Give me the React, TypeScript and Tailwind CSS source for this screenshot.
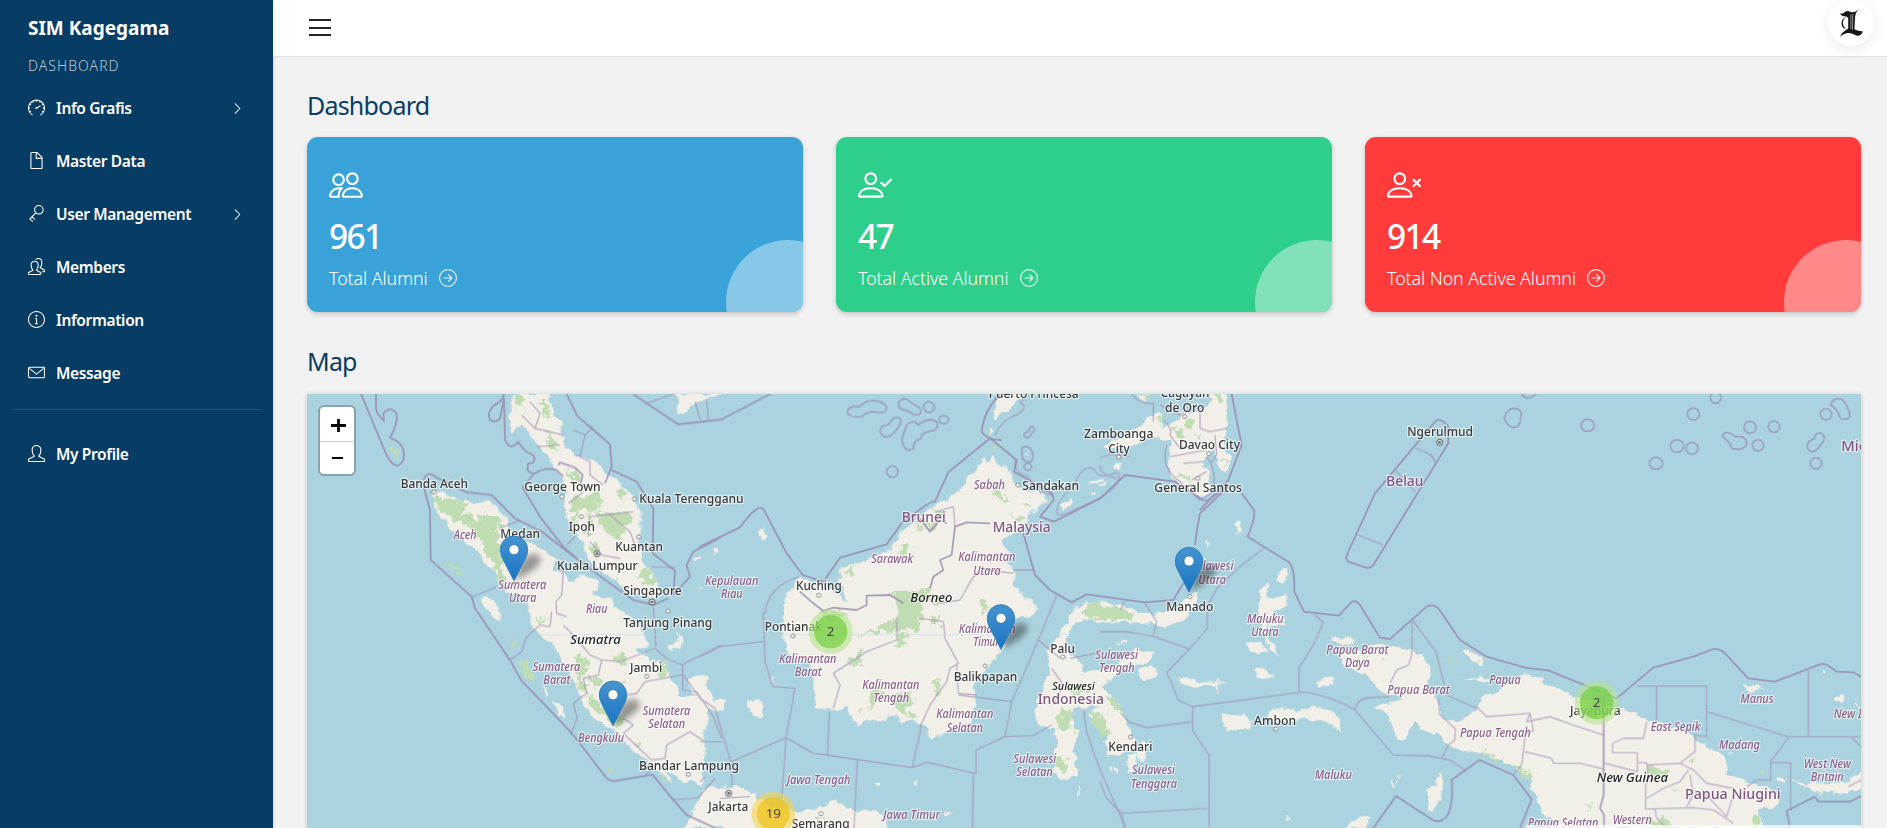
import type { ReactNode } from "react";
import { BsArrowRightCircle, BsChevronRight, BsPeople } from "react-icons/bs";
import { SlDoc, SlEnvolope, SlInfo, SlKey, SlPeople, SlSpeedometer, SlUser } from "react-icons/sl";

/* ---------- Sidebar ---------- */

const menu: { label: string; icon: ReactNode; more?: boolean }[] = [
  { label: "Info Grafis", icon: <SlSpeedometer />, more: true },
  { label: "Master Data", icon: <SlDoc /> },
  { label: "User Management", icon: <SlKey />, more: true },
  { label: "Members", icon: <SlPeople /> },
  { label: "Information", icon: <SlInfo /> },
  { label: "Message", icon: <SlEnvolope /> },
];

function MenuRow({ label, icon, more }: { label: string; icon: ReactNode; more?: boolean }) {
  return (
    <a className="flex h-[53px] items-center pl-7 pr-[29px] text-white">
      <span className="mb-[3px] text-[17px]">{icon}</span>
      <span className="ml-[11px] flex-1 whitespace-nowrap text-[15.5px] font-semibold tracking-[-0.35px]">{label}</span>
      {more && <BsChevronRight className="text-[13px]" />}
    </a>
  );
}

function Sidebar() {
  return (
    <aside className="z-10 flex h-full w-[273px] shrink-0 flex-col bg-[#073c64] shadow-[0_0_3px_rgba(0,0,0,0.2)]">
      <div className="mt-[14px] pl-7 text-[19px] leading-7 font-bold text-white">SIM Kagegama</div>
      <div className="mt-[12px] pl-7 text-[14px] leading-6 font-light tracking-[1.05px] text-[#b9c9d6]">DASHBOARD</div>
      <nav className="mt-[4px]">
        {menu.map((m) => (
          <MenuRow key={m.label} {...m} />
        ))}
      </nav>
      <hr className="mx-[11px] mt-[9px] border-t border-[#234f75]" />
      <div className="mt-[18px]">
        <MenuRow label="My Profile" icon={<SlUser />} />
      </div>
    </aside>
  );
}

/* ---------- Statistic cards ---------- */

const personPath =
  "M6 8a3 3 0 1 0 0-6 3 3 0 0 0 0 6m2-3a2 2 0 1 1-4 0 2 2 0 0 1 4 0m4 8c0 1-1 1-1 1H1s-1 0-1-1 1-4 6-4 6 3 6 4m-1-.004c-.001-.246-.154-.986-.832-1.664C9.516 10.68 8.289 10 6 10s-3.516.68-4.168 1.332c-.678.678-.83 1.418-.832 1.664z";

function PersonIcon({ badge }: { badge: string }) {
  return (
    <svg viewBox="0 0 16 16" className="size-[34px]" fill="currentColor">
      <path d={personPath} />
      <path d={badge} />
    </svg>
  );
}

const checkPath =
  "M15.854 5.146a.5.5 0 0 1 0 .708l-3 3a.5.5 0 0 1-.708 0l-1.5-1.5a.5.5 0 0 1 .708-.708L12.5 7.793l2.646-2.647a.5.5 0 0 1 .708 0z";
const crossPath =
  "M12.146 5.146a.5.5 0 0 1 .708 0L14 6.293l1.146-1.147a.5.5 0 0 1 .708.708L14.707 7l1.147 1.146a.5.5 0 0 1-.708.708L14 7.707l-1.146 1.147a.5.5 0 0 1-.708-.708L13.293 7l-1.147-1.146a.5.5 0 0 1 0-.708z";

function StatCard({ tone, icon, value, label }: { tone: string; icon: ReactNode; value: string; label: string }) {
  return (
    <div className={`relative h-[175px] overflow-hidden rounded-[11px] pt-[31px] pl-[22px] text-white shadow-[0_2px_5px_rgba(0,0,0,0.2)] ${tone}`}>
      <div className="h-[34px] text-[34px]">{icon}</div>
      <div className="mt-[10px] text-[33.5px] leading-[48px] font-medium tracking-[-1.7px]">{value}</div>
      <div className="mt-[6px] flex items-center">
        <span className="text-[17.8px] leading-[25px] font-light tracking-[-0.05px]">{label}</span>
        <BsArrowRightCircle className="mb-[2px] ml-[11px] text-[18px] opacity-90" />
      </div>
      <div className="absolute right-[-47px] bottom-[-52px] size-[124px] rounded-full bg-white/40" />
    </div>
  );
}

/* ---------- Map ---------- */

type Pt = { dx: number; d: string };

const land: Pt[] = [
  // Sumatra
  { dx: 0, d: "M400 325L430 318L470 345L520 352L570 346L600 385L625 410L620 430L650 440L690 475L740 500L765 525L760 555L800 572L815 600L830 575L870 605L880 590L895 600L880 630L930 640L945 665L985 690L1020 725L1045 775L1010 790L1020 805L1065 830L1100 835L1105 880L1135 905L1130 930L1190 935L1225 965L1225 1010L1210 1040L1215 1100L1205 1205L1180 1190L1150 1195L1120 1165L1095 1155L1118 1200L1080 1165L1040 1125L970 1075L930 1030L880 1000L840 940L830 900L800 850L760 780L700 730L680 640L620 620L580 560L545 510L500 470L450 430L405 380Z" },
  { dx: 0, d: "M540 640L570 640L600 670L600 705L585 700L560 670Z M730 905L750 925L740 935Z M762 945L785 965L800 1000L775 985Z M820 590L850 570L895 590L900 612L870 620L830 600Z" },
  // Malay peninsula
  { dx: 0, d: "M640 27L748 27L760 90L785 120L790 175L820 210L880 222L920 270L960 290L1000 340L1025 390L1025 440L1015 480L1030 530L1065 580L1085 630L1050 645L1000 620L920 570L880 540L850 480L820 440L800 400L790 350L800 320L780 270L740 215L700 165L670 110L638 150L628 90Z" },
  { dx: 0, d: "M1132 27L1265 27L1190 50L1165 80L1130 88Z M1200 600h6v8h-6z M1120 790L1140 765L1128 745L1150 760L1145 790L1105 800L1100 780Z M1190 515h12v12h-12z M1240 490h8v14h-8z" },
  // Bangka and Belitung
  { dx: 1200, d: "M-40 885L-5 868L20 870L22 905L40 940L82 945L70 982L30 970L0 950L-30 910Z M145 950L175 942L197 965L190 990L160 998L145 980Z M175 440L190 430L208 450L190 468Z M205 880l10 -6v14z M38 490l10 8l-8 16z" },
  // Borneo
  { dx: 1200, d: "M300 580L262 620L248 680L250 740L262 800L290 830L330 825L342 860L340 920L350 970L400 975L440 970L470 1018L500 1002L555 1008L580 985L610 1008L650 1010L685 1030L690 1068L740 1040L810 1025L825 960L820 920L835 880L860 850L905 800L915 780L900 750L930 700L1000 690L1018 670L980 640L935 600L948 570L920 520L930 505L900 470L930 450L990 410L975 390L1040 350L1030 325L960 310L940 295L920 250L890 235L878 208L865 238L848 208L835 250L800 280L790 310L755 325L740 350L700 365L660 390L600 450L560 505L500 520L430 545L420 590L445 650L370 600L330 590Z" },
  // Sulawesi
  { dx: 1200, d: "M1100 720L1120 670L1155 655L1200 650L1260 660L1300 680L1360 685L1430 670L1460 635L1490 620L1500 640L1470 680L1445 710L1380 725L1330 712L1200 712L1150 705L1120 725L1100 760L1100 800L1140 830L1150 858L1200 855L1250 835L1310 795L1360 800L1355 830L1290 840L1230 885L1205 900L1235 940L1270 985L1290 1030L1312 1080L1260 1110L1220 1110L1215 1070L1222 1050L1180 1010L1165 980L1200 958L1130 970L1112 985L1130 1040L1120 1100L1132 1172L1080 1185L1060 1160L1070 1080L1060 1030L1010 1015L1010 950L1050 870L1045 800L1070 760Z" },
  { dx: 1200, d: "M1315 850L1350 840L1375 860L1370 880L1330 885L1315 870Z M1285 1110L1310 1100L1305 1150L1280 1165Z M1325 1060L1350 1075L1325 1135L1310 1120Z M1245 1140L1255 1150L1250 1168Z M1135 1195L1142 1210L1135 1250Z M1245 775L1280 768L1275 778Z M640 1190h8v8h-8z M735 1280L755 1290L735 1290Z M528 1193h12v8h-12z M1232 1145h10v12h-10z" },
  // Java
  { dx: 1200, d: "M-5 1290L20 1210L60 1208L110 1203L160 1225L220 1265L280 1280L350 1275L375 1265L382 1243L410 1245L440 1270L530 1280L560 1300L560 1340L80 1340L40 1310Z M-50 1330L15 1205L50 1205L60 1320Z" },
  // Palawan and Sabah islets
  { dx: 1200, d: "M900 27L970 27L940 60L910 80L885 110L880 90Z M870 125l10 10l-10 15z M1080 360L1110 340L1120 348L1090 375Z M1165 290l40 -8v10l-38 8z M1165 320l15 2v12z M1200 300l20 -10v14z M975 208l10 0v10z" },
  // Mindanao
  { dx: 2400, d: "M0 185L60 160L110 130L150 88L180 82L192 100L190 140L210 110L235 100L245 80L300 80L330 50L330 27L375 27L385 80L378 140L370 190L390 220L375 270L355 230L340 190L315 200L310 230L332 270L325 325L310 340L270 320L220 280L205 230L215 160L190 165L165 150L130 170L100 180L60 190Z M40 235L70 235L60 255L45 250Z M110 27L150 27L130 50Z" },
  // Moluccas
  { dx: 2400, d: "M535 560L560 548L565 570L545 595L530 590Z M475 640L490 600L510 585L500 640L560 628L568 660L520 680L555 700L560 722L500 720L495 750L520 780L540 815L505 790L490 750L470 670Z M445 775L480 770L500 800L470 805L450 800Z M470 850L490 850L520 875L500 882L470 875Z M232 880L260 878L300 888L380 890L355 895L360 935L348 900L260 902L235 895Z M645 890L690 880L700 892L660 905Z M360 990L430 985L455 1010L450 1030L400 1042L370 1020Z M500 985L525 968L600 975L640 965L710 985L730 1040L660 1005L600 1000L545 1015L505 1005Z M410 400L425 405L420 440L408 455Z M315 460L332 475L328 488Z M690 765L740 752L768 765L760 778L700 775Z M875 1180L882 1205L872 1200Z M905 1158L892 1200L888 1195Z M1015 1160L1030 1190L1025 1230L1000 1275L980 1278L985 1215L1005 1200Z M730 1329L790 1295L820 1300L790 1329Z M553 1295h12v8h-12z" },
  // New Guinea
  { dx: 2400, d: "M720 820L740 800L840 780L920 795L970 808L990 850L980 900L1005 935L1030 1000L1085 1010L1130 970L1150 930L1200 915L1270 865L1340 890L1410 930L1490 960L1570 970L1640 1005L1710 1030L1780 1050L1800 1080L1860 1100L1880 1140L1880 1170L1940 1190L2010 1210L2038 1230L2036 1260L1970 1270L1990 1329L1375 1329L1330 1285L1300 1220L1290 1180L1240 1140L1190 1120L1100 1095L1050 1085L1020 1055L980 1040L940 1010L920 1060L890 1060L870 1000L820 965L870 955L905 940L860 925L830 905L810 880L740 850Z M1085 798L1110 800L1150 825L1145 840L1120 832Z M1085 875L1160 880L1200 885L1150 892Z" },
  // New Britain, Manus
  { dx: 3540, d: "M930 1178L980 1200L1050 1190L1100 1190L1143 1155L1143 1215L1080 1228L1010 1222L960 1200Z M795 905L830 898L855 912L800 918Z M1062 935L1090 935L1095 950L1070 948Z M890 1172L910 1180L910 1195L895 1188Z M1025 853L1040 860L1035 866Z M745 1105L758 1100L750 1112Z M1120 940L1143 965L1135 965Z" },
];

const forest: Pt[] = [
  { dx: 0, d: "M400 330L470 350L510 355L490 385L510 400L550 395L560 380L595 395L610 420L590 430L600 470L605 560L615 590L590 570L585 530L545 505L540 460L500 420L440 395L410 370Z M435 530L490 562L485 568L440 545Z M585 530L620 580L615 610L590 590Z M660 820L680 822L705 880L690 888L660 860Z M640 750L650 770L640 795L635 780Z M820 815L860 815L862 860L840 870L860 890L860 930L835 900L825 850Z M870 880L910 880L905 905L880 900Z M860 920L900 960L940 985L970 1000L960 1030L910 990L870 960Z M940 800L980 820L975 845L940 830Z M1075 845L1100 825L1100 875L1080 885Z M1000 1075L1025 1078L1020 1092Z M1075 1155L1105 1185L1095 1185Z M925 1158l20 6l-6 6z M700 700L740 700L730 720Z M960 890l20 -4v10z" },
  { dx: 0, d: "M655 27L672 27L668 70L645 60L640 85Z M720 60L740 45L748 95L735 100Z M735 130L750 135L770 200L745 190Z M795 250L845 270L840 295L820 285Z M815 340L860 330L895 325L910 345L870 390L875 430L855 455L865 375L835 370L830 420L815 410Z M890 375L930 385L990 380L1000 410L970 430L965 465L925 455L900 420Z M945 305L975 320L975 355L950 330Z M1010 570L1050 550L1070 600L1040 600Z M275 190L290 188L298 205L288 228Z M870 475L890 485L895 520L875 500Z" },
  { dx: 1200, d: "M570 618L690 615L690 640L668 650L655 738L560 738L480 755L500 740L590 700L590 640Z M590 745L617 745L617 790L590 790Z M445 840L480 790L485 840Z M690 690L718 695L715 720L692 715Z M350 685L390 675L435 685L400 710Z M670 420L705 410L700 435L685 440Z M875 320L915 320L918 345L890 340Z M580 930L630 920L640 955L610 985L585 970Z M505 920L545 910L530 960L510 970Z M470 970L500 965L480 990Z M600 480L630 470L630 495L600 505Z M610 990L650 985L645 1000Z M700 890L720 880L720 920L705 930Z M845 650L862 650L860 680L845 680Z M435 545L470 540L440 580Z M930 390L980 400L960 415Z M705 370L735 368L730 395L710 395Z M690 650L720 640L712 668Z M645 410L660 420L655 450Z M870 185l18 -2l-8 14z M970 358l25 0l-10 8z" },
  { dx: 1200, d: "M1150 665L1200 652L1210 670L1260 665L1300 685L1290 705L1200 705L1150 690Z M1080 980L1110 970L1120 1035L1070 1030Z M1170 980L1195 985L1228 1040L1215 1050L1175 1015Z M1215 930L1245 940L1270 985L1240 975Z M1065 1115L1100 1120L1100 1160L1070 1150Z M1115 900L1170 905L1165 925L1120 925Z M340 1290l30 6l-20 10z" },
  { dx: 2400, d: "M245 115L280 108L275 130L250 132Z M225 130L250 135L250 165L225 160Z M280 150L305 145L300 175Z M230 262L265 275L260 290Z M345 27L372 27L365 50L345 48Z M370 220L380 225L372 260Z M172 95l14 0l-4 28z M780 815L800 815L795 825Z M845 818h10v8h-10z M1035 822l12 0v10z M1135 825l18 6l-12 6z M125 30h14v12z" },
  { dx: 3540, d: "M505 1150L570 1152L570 1180L520 1175Z M575 1210L600 1215L590 1225Z M100 1135L160 1170L150 1190L110 1155Z M820 1285L840 1300L835 1325L818 1315Z M515 1305L570 1302L570 1329L515 1329Z M630 1115h10v12h-10z M0 1095L60 1120L40 1125Z M835 1152h12v12z M315 1255l8 0v28z M335 1250l6 0v30z" },
];

// National and maritime boundaries
const bold: Pt[] = [
  { dx: 0, d: "M183 27L262 215Q290 262 310 225Q320 175 270 158Q295 115 290 85Q270 60 250 85L252 108Q225 85 228 60V27" },
  { dx: 0, d: "M612 27Q608 50 580 62Q560 85 570 105Q590 115 600 100L612 40L615 165Q630 200 655 170Q670 200 700 210Q712 235 685 235Q675 265 705 265Q730 245 770 255L790 275" },
  { dx: 0, d: "M800 27L832 93L875 130L930 178L935 245L915 295M935 255L1010 290L1060 370L1058 505L1125 557L1120 630L1170 575L1160 540L1180 500L1265 455" },
  { dx: 0, d: "M1000 27L1040 55L1135 118L1265 103L1420 22" },
  { dx: 0, d: "M370 285Q385 255 405 275L500 322L575 330L645 400L725 440L835 525L930 595L1000 645L1060 660L1105 640M390 375L392 525L515 635L525 670L630 825L665 888L745 970L820 1050L920 1180Q935 1192 955 1186L1058 1169L1120 1245L1160 1290L1245 1329M390 375L370 300M700 268L668 308L720 395L790 485L830 520M775 240L780 232L825 248L848 270L840 300" },
  { dx: 1200, d: "M0 485L120 427Q175 350 192 375L260 505L308 570L370 590L420 518L560 478L605 415Q700 340 705 350L745 262L870 160L950 225L942 260L1055 325L1062 345L1020 395L1062 410L1200 340L1275 270L1425 290L1500 340Q1512 350 1525 345L1590 300" },
  { dx: 1200, d: "M845 140Q850 80 900 27M845 140Q860 165 905 165M970 445L1005 570L1050 615L1115 652L1160 628L1335 652L1420 645L1450 595M1500 385L1590 300M1500 385Q1490 430 1485 480" },
  { dx: 1200, d: "M300 620L340 655L370 678L400 668L470 675L500 660L500 632L570 630L610 655M690 610L700 575L730 555L720 525L755 510L765 425L800 412L870 415M655 395L690 440L720 405L740 415" },
  { dx: 2400, d: "M395 27L415 130L425 180L385 285L300 375M425 325L462 375Q468 395 443 455L565 530Q585 545 583 620L612 680L717 692L750 655Q765 640 780 660L840 758L870 762L980 665Q1000 655 1015 670L1080 765L1160 815L1275 848L1345 856L1550 940L1660 848L1780 815L1840 792Q1855 790 1870 800L1945 880L2025 890L2160 838Q2175 833 2190 845L2210 860L2260 862L2290 880" },
  { dx: 2400, d: "M738 520L745 500L825 325L1005 110Q1020 95 1045 125L1045 175L820 540Q810 552 795 547L745 530Z" },
  { dx: 2400, d: "M820 1329L888 1233L990 1300Q1015 1320 1040 1295Q1060 1265 1055 1185L1138 1125L1240 1170L1295 1243L1260 1329M1511 930V1230L1500 1270L1512 1290V1329M2070 1329L2060 1278L2145 1235L2155 1250L2250 1250L2290 1230" },
];

// Reef and atoll limits in the South China Sea and Micronesia
const atolls: Pt[] = [
  { dx: 1200, d: "M442 80Q445 60 480 65Q500 40 540 50Q560 60 560 70Q555 90 520 80Q500 80 485 95Q445 100 442 80 M540 140Q540 120 565 120Q580 90 600 100Q610 115 575 150Q550 165 540 140 M595 55Q610 30 630 50L660 70Q670 90 645 90Q620 75 600 72Z M605 165Q610 150 620 120Q640 100 655 120Q685 95 710 110Q720 135 685 140Q660 145 665 160Q640 165 640 190Q620 205 610 180Z M671 66a16 16 0 1 0 32 0a16 16 0 1 0-32 0 M717 104a14 12 0 1 0 28 0a14 12 0 1 0-28 0 M560 260a17 17 0 1 0 34 0a17 17 0 1 0-34 0 M965 190q10-12 25 0q15 15 5 38q-15 8-28-6z M972 245a11 11 0 1 0 22 0a11 11 0 1 0-22 0 M972 152q0-12 15-12q0-18 12-14q10 10-5 20q-10 22-22 6" },
  { dx: 3540, d: "M125 27Q140 50 168 27 M73 98Q80 70 105 70Q130 75 122 98Q120 130 98 127Q80 125 73 98Z M303 121a20 18 0 1 0 40 0a20 18 0 1 0-40 0 M622 87a18 18 0 1 0 36 0a18 18 0 1 0-36 0 M691 38a16 17 0 1 0 32 0a16 17 0 1 0-32 0 M571 183a20 19 0 1 0 40 0a20 19 0 1 0-40 0 M618 190a18 18 0 1 0 36 0a18 18 0 1 0-36 0 M508 235a20 18 0 1 0 40 0a20 18 0 1 0-40 0 M792 127a18 18 0 1 0 36 0a18 18 0 1 0-36 0 M865 125a17 17 0 1 0 34 0a17 17 0 1 0-34 0 M817 181a17 17 0 1 0 34 0a17 17 0 1 0-34 0 M991 235a17 17 0 1 0 34 0a17 17 0 1 0-34 0 M1021 88a17 17 0 1 0 34 0a17 17 0 1 0-34 0 M727 155Q735 130 765 155Q800 150 800 178Q785 200 755 190Q750 170 727 155Z M982 180Q985 165 1003 162Q1005 140 1025 145Q1042 160 1022 178Q1010 200 995 200Q980 195 982 180Z M1052 60Q1060 35 1085 42Q1105 60 1110 95Q1090 112 1078 95Q1075 75 1052 60Z" },
];

// Province boundaries
const fine: Pt[] = [
  { dx: 0, d: "M665 90L705 130L720 85L690 50M705 130L790 150M710 185L780 180M820 135L855 150L875 130M855 150L840 215M830 210L870 230L870 270L910 300M805 355L845 325L850 295M865 455L870 395L1000 380M925 385L990 440L1005 480M870 470L905 510L960 520M1040 55L1120 27M1185 50L1200 103M1220 45L1225 103M600 430L660 405M800 480L825 455M1055 545L1125 548M515 637L590 605M765 530L790 560L785 630L768 650L770 685L800 695" },
  { dx: 0, d: "M630 825L665 800L680 755L720 720L750 725L755 680M790 720L830 760L870 810L905 825L960 830L1065 790L1100 820L1145 840L1265 780M905 825L895 870L850 880L860 925L820 955L832 1000L812 1048M980 930L1010 925L1035 890L1145 870M1060 665L1068 785M1148 840L1148 915L1190 920L1240 995L1265 1060M970 1000L1000 1020L970 1045L1055 1125L1095 1120L1100 1080L1170 1040L1215 1070M1120 1245L1195 1238L1245 1180M1035 1170L1080 1135" },
  { dx: 1200, d: "M-50 870L0 940L45 970L92 1130M95 1130L258 1058L340 1105L380 1110L635 1148L682 1132L828 1166M0 1070H68M190 680L195 830L218 905L285 910L258 1058L245 1240M190 770L60 785L0 815M195 685Q205 600 300 575M388 980L382 1110M472 1125L462 1329M665 1020L637 1148M828 1165V1095L915 1055L935 950L1015 765L1070 630M775 930L935 950M820 1165L817 1329M915 1055L1000 1052L1055 1020M940 555L1000 555M660 1025L690 960L740 890L750 850L775 835L735 760L730 710L660 700M400 970L420 900L400 865L500 800L590 765L590 700M720 655L780 645L820 575L860 555L940 565M765 425L760 365L710 380M770 840L775 925L830 930M1055 850L1090 900L1060 960M1150 970L1160 1040L1200 1155L1260 1290L1275 1329M15 1175L0 1190M95 1130V1200M1015 765L1080 820M1110 820L1210 800M60 1240L150 1235" },
  { dx: 1200, d: "M885 150Q910 100 950 90Q990 60 960 55L985 27M945 225Q940 260 985 275Q1000 320 1060 330M1070 375Q1080 330 1120 310Q1140 240 1180 250Q1200 290 1250 260Q1280 290 1200 340L1100 385Q1070 400 1070 375M1200 220Q1230 200 1290 215M1200 240Q1200 270 1250 280" },
  { dx: 2400, d: "M95 27Q120 60 160 55V110M180 60L240 90L300 60V130L330 140L380 130M210 215L320 195M190 105Q220 130 210 150L240 190L290 180M310 230L250 235M275 285L320 260M200 180Q180 250 240 290L300 345L340 320Q350 250 320 215M345 150L350 210L330 235" },
  { dx: 2400, d: "M490 490L420 545L350 610L322 665V730L268 792L200 862L235 945L278 965L600 922L625 922Q720 945 765 975L880 1110L980 1112L1050 1125L1095 1155M640 685L670 712L640 780L597 848V922M278 965V1037L327 1110V1329M65 1285L322 1270M0 740H80L158 753L268 792M72 650L62 675M135 655L170 710L160 750M65 985L85 1010L140 1028L278 1010M775 450L850 480M945 190Q1000 205 1005 235M885 255L945 320M990 205L1005 225M765 975Q770 940 810 938L870 935M937 705L935 810L925 840L890 855L870 895M937 705L1008 800L1040 930L1130 970M1015 940L1020 990L1065 1030L1065 1065L1045 1080L1025 1120M0 1190L20 1240L65 1285L75 1329M1130 965L1160 995L1290 985L1280 1010L1350 995L1420 1020L1511 1050M1275 1100L1355 1120L1360 1135L1440 1135L1511 1152M1290 985L1300 1035L1275 1050L1270 1100L1265 1140L1240 1168" },
  { dx: 3540, d: "M470 903H680V980L925 1055H1143M530 903V1010M645 1050L680 1055V980M985 855V1055M925 1058L872 1130V1185H830L800 1205M872 1133H932V1275M1115 1057L1143 1085M500 1010L490 1060H430L398 1075V1103H472V1160L375 1135M472 1133H500L505 1175L497 1200V1272L640 1268L700 1275L760 1315M500 1140L600 1135L640 1155L680 1195L760 1210M645 1050V1100L600 1135M500 1240L550 1210L600 1190L625 1155M630 1170L640 1230L620 1265M665 1215L740 1295L760 1230M525 1272L530 1300L560 1329M1105 1205L1143 1185" },
];

type Label = [text: string, x: number, y: number, width: number];

const cities: Label[] = [
  ["Banda Aceh", 302, 309, 202],
  ["George Town", 673, 319, 229],
  ["Kuala Terengganu", 1018, 354, 313],
  ["Ipoh", 806, 438, 79],
  ["Medan", 601, 459, 119],
  ["Kuantan", 946, 497, 143],
  ["Kuala Lumpur", 771, 556, 242],
  ["Singapore", 970, 630, 175],
  ["Tanjung Pinang", 970, 727, 267],
  ["Jambi", 990, 861, 97],
  ["Bandar Lampung", 1017, 1155, 300],
  ["Jakarta", 1225, 1278, 120],
  ["Semarang", 1475, 1330, 174],
  ["Kuching", 1488, 616, 137],
  ["Pontianak", 1394, 738, 172],
  ["Sandakan", 2167, 314, 170],
  ["Balikpapan", 1961, 887, 191],
  ["Palu", 2251, 804, 74],
  ["Kendari", 2425, 1098, 132],
  ["Manado", 2599, 677, 141],
  ["Ambon", 2862, 1020, 126],
  ["Zamboanga", 2352, 158, 208],
  ["City", 2425, 204, 64],
  ["Davao City", 2637, 192, 183],
  ["General Santos", 2563, 321, 263],
  ["Cagayan", 2582, 36, 146],
  ["de Oro", 2595, 82, 118],
  ["Puerto Princesa", 2066, 38, 270],
  ["Ngerulmud", 3322, 152, 197],
  ["Jayapura", 3810, 991, 152],
];

const regions: Label[] = [
  ["Aceh", 461, 463, 69],
  ["Sumatera", 595, 611, 144],
  ["Utara", 627, 652, 82],
  ["Riau", 858, 685, 64],
  ["Sumatera", 698, 857, 143],
  ["Barat", 730, 897, 81],
  ["Sumatera", 1028, 990, 143],
  ["Selatan", 1045, 1030, 110],
  ["Bengkulu", 834, 1071, 138],
  ["Kepulauan", 1215, 599, 160],
  ["Riau", 1263, 640, 65],
  ["Sarawak", 1714, 533, 125],
  ["Sabah", 2022, 313, 93],
  ["Kalimantan", 1975, 529, 171],
  ["Utara", 2020, 569, 82],
  ["Kalimantan", 1437, 834, 172],
  ["Barat", 1484, 874, 81],
  ["Kalimantan", 1687, 911, 171],
  ["Tengah", 1720, 951, 107],
  ["Kalimantan", 1976, 744, 171],
  ["Timur", 2020, 784, 78],
  ["Kalimantan", 1909, 1000, 171],
  ["Selatan", 1940, 1041, 109],
  ["Sulawesi", 2140, 1134, 129],
  ["Selatan", 2149, 1174, 109],
  ["Jawa Tengah", 1460, 1198, 192],
  ["Jawa Timur", 1750, 1302, 170],
  ["Sulawesi", 2386, 822, 128],
  ["Tengah", 2397, 862, 107],
  ["Sulawesi", 2496, 1167, 129],
  ["Tenggara", 2492, 1208, 139],
  ["Sulawesi", 2672, 556, 128],
  ["Utara", 2695, 597, 83],
  ["Maluku", 2841, 713, 110],
  ["Utara", 2854, 753, 82],
  ["Maluku", 3044, 1182, 112],
  ["Papua Barat", 3079, 807, 186],
  ["Daya", 3135, 847, 74],
  ["Papua Barat", 3262, 927, 187],
  ["Papua", 3568, 898, 94],
  ["Papua Tengah", 3480, 1056, 212],
  ["Papua Selatan", 3683, 1325, 212],
  ["Western", 3938, 1317, 117],
  ["East Sepik", 4052, 1038, 149],
  ["Manus", 4321, 953, 100],
  ["Madang", 4257, 1092, 123],
  ["New Ireland", 4601, 999, 180],
  ["West New", 4511, 1149, 142],
  ["Britain", 4532, 1189, 99],
];

const countries: Label[] = [
  ["Brunei", 1805, 411, 132],
  ["Malaysia", 2078, 440, 174],
  ["Indonesia", 2213, 957, 199],
  ["Belau", 3259, 304, 111],
  ["Papua Niugini", 4155, 1243, 287],
  ["Micronesia", 4624, 199, 230],
];

const islands: Label[] = [
  ["Sumatra", 811, 776, 151],
  ["Borneo", 1831, 652, 126],
  ["New Guinea", 3890, 1190, 214],
];

const dots: [number, number][] = [
  [402, 321], [786, 335], [1003, 342], [844, 395], [1016, 456], [1104, 678], [1040, 874], [1165, 1168],
  [1556, 631], [1479, 753], [2154, 300], [2056, 843], [2289, 816], [2492, 1056], [2670, 635], [2927, 1032],
  [2457, 216], [2727, 206], [2654, 95], [2693, 280], [1563, 1286],
];
const capitals: [number, number][] = [[891, 506], [1056, 651], [1286, 1225], [3419, 172]];

function Layer({ items, ...rest }: { items: Pt[]; fill?: string; stroke?: string; strokeWidth?: number; opacity?: number; filter?: string }) {
  return (
    <g {...rest} strokeLinejoin="round">
      {items.map((s, i) => (
        <path key={i} d={s.d} transform={`translate(${s.dx} 0)`} />
      ))}
    </g>
  );
}

function Labels({ items, size, fill, halo, italic }: { items: Label[]; size: number; fill: string; halo: number; italic?: boolean }) {
  return (
    <g fontSize={size} fontWeight={500} fill={fill} fontStyle={italic ? "italic" : "normal"} stroke="#fff" strokeOpacity={0.6} strokeWidth={halo} strokeLinejoin="round" paintOrder="stroke">
      {items.map(([t, x, y, w], i) => (
        <text key={i} x={x} y={y} textLength={w} lengthAdjust="spacingAndGlyphs">
          {t}
        </text>
      ))}
    </g>
  );
}

function Pin({ x, y }: { x: number; y: number }) {
  return (
    <g transform={`translate(${x} ${y})`}>
      <path d="M0 0L25 -60Q60 -95 80 -68Q85 -40 0 0Z" fill="#000" opacity="0.38" filter="url(#soft)" />
      <path d="M0 0L-33 -64Q-41 -78 -41 -93A41 41 0 0 1 41 -93Q41 -78 33 -64Z" fill="url(#pin)" stroke="#2e7fb8" strokeWidth="3" />
      <circle cy="-93" r="15" fill="#fff" stroke="#2e6c97" strokeWidth="2" />
    </g>
  );
}

function Cluster({ x, y, n, outer, inner }: { x: number; y: number; n: number; outer: string; inner: string }) {
  return (
    <g transform={`translate(${x} ${y})`}>
      <circle r="66" fill={outer} fillOpacity="0.6" />
      <circle r="50" fill={inner} fillOpacity="0.65" />
      <text y="14" textAnchor="middle" fontSize="40" fill="#444">
        {n}
      </text>
    </g>
  );
}

function MapCanvas() {
  return (
    <svg viewBox="21 27 4662 1302" preserveAspectRatio="none" className="block h-[434px] w-full bg-[#aad3df] font-['Noto_Sans',sans-serif]">
      <defs>
        <filter id="coast" x="0" y="0" width="4700" height="1340" filterUnits="userSpaceOnUse">
          <feTurbulence type="fractalNoise" baseFrequency="0.035" numOctaves="3" seed="4" />
          <feDisplacementMap in="SourceGraphic" scale="26" xChannelSelector="R" yChannelSelector="G" />
        </filter>
        <filter id="wander" x="0" y="0" width="4700" height="1340" filterUnits="userSpaceOnUse">
          <feTurbulence type="fractalNoise" baseFrequency="0.05" numOctaves="3" seed="9" />
          <feDisplacementMap in="SourceGraphic" scale="42" xChannelSelector="R" yChannelSelector="G" />
        </filter>
        <filter id="soft" x="-50%" y="-50%" width="200%" height="200%">
          <feGaussianBlur stdDeviation="10" />
        </filter>
        <linearGradient id="pin" x1="0" y1="0" x2="0" y2="1">
          <stop offset="0" stopColor="#4594cf" />
          <stop offset="1" stopColor="#1b74c4" />
        </linearGradient>
      </defs>
      <Layer items={land} fill="#f2efe9" filter="url(#coast)" />
      <Layer items={forest} fill="#bfdcb2" filter="url(#wander)" />
      <Layer items={fine} fill="none" stroke="#a38bb2" strokeWidth={4} opacity={0.65} />
      <Layer items={atolls} fill="none" stroke="#9583ab" strokeWidth={4.5} opacity={0.7} />
      <Layer items={bold} fill="none" stroke="#9583ab" strokeWidth={5.5} opacity={0.75} />
      <path d="M21 748H4683" stroke="#bcd8dc" strokeWidth="3" opacity="0.6" />
      <g fill="#fff" stroke="#777" strokeWidth="2.5">
        {dots.map(([x, y]) => (
          <circle key={`${x}-${y}`} cx={x} cy={y} r="6" />
        ))}
      </g>
      {capitals.map(([x, y]) => (
        <g key={x} transform={`translate(${x} ${y})`}>
          <circle r="9" fill="#eee" stroke="#555" strokeWidth="3" />
          <circle r="4" fill="#555" />
        </g>
      ))}
      <Labels items={regions} size={37} fill="#8d618b" halo={7} italic />
      <Labels items={countries} size={43} fill="#80557f" halo={7} />
      <Labels items={cities} size={39.5} fill="#3a3a3a" halo={8} />
      <Labels items={islands} size={40} fill="#222" halo={6} italic />
      <Labels items={[["Sulawesi", 2257, 914, 127]]} size={33} fill="#222" halo={6} italic />
      <rect x="3678" y="1320" width="1010" height="10" fill="#fff" opacity="0.75" />
      <Pin x={642} y={587} />
      <Pin x={939} y={1022} />
      <Pin x={2103} y={793} />
      <Pin x={2667} y={621} />
      <Cluster x={1592} y={740} n={2} outer="#b5e28c" inner="#6ecc39" />
      <Cluster x={3890} y={953} n={2} outer="#b5e28c" inner="#6ecc39" />
      <Cluster x={1420} y={1286} n={19} outer="#f1d357" inner="#f0c20c" />
    </svg>
  );
}

/* ---------- Page ---------- */

function Emblem() {
  return (
    <svg viewBox="178 26 76 86" className="h-[29px] w-[25px]">
      <g fill="#161616">
        <path d="M180 36Q184 42 192 37Q200 28 212 33Q222 38 236 28Q228 36 227 48L225 86Q232 92 251 93Q244 108 232 106Q216 96 203 98Q192 100 181 109Q184 98 196 91L206 84V52Q202 46 194 47Q184 46 180 36Z" />
        <path d="M202 48Q190 54 190 68Q190 78 198 84Q188 84 186 72Q184 54 202 48Z" />
      </g>
      <path d="M214 42V86M220 40L219 88" stroke="#fff" strokeWidth="1.6" />
    </svg>
  );
}

export default function App() {
  return (
    <div className="flex h-[828px] w-full overflow-hidden bg-[#f2f2f2] font-['Noto_Sans','Open_Sans',sans-serif]">
      <Sidebar />
      <div className="flex min-w-0 flex-1 flex-col">
        <header className="flex h-[57px] shrink-0 items-start justify-between border-b border-[#e2e2e2] bg-white pr-[13px] pl-[36px]">
          <div className="mt-[19px] flex h-[17px] w-[22px] flex-col justify-between">
            <span className="h-[2px] bg-[#212529]" />
            <span className="h-[2px] bg-[#212529]" />
            <span className="h-[2px] bg-[#212529]" />
          </div>
          <div className="flex size-[46px] items-center justify-center rounded-full bg-white shadow-[0_3px_14px_rgba(0,0,0,0.09)]">
            <Emblem />
          </div>
        </header>
        <main className="px-[26px] pl-[34px]">
          <h1 className="mt-[30px] text-[25px] leading-9 font-normal tracking-[-0.8px] text-[#083d66]">Dashboard</h1>
          <div className="mt-[14px] grid grid-cols-3 gap-[33px]">
            <StatCard tone="bg-[#38a2d9]" icon={<BsPeople />} value="961" label="Total Alumni" />
            <StatCard tone="bg-[#2ecf8b]" icon={<PersonIcon badge={checkPath} />} value="47" label="Total Active Alumni" />
            <StatCard tone="bg-[#ff3b3b]" icon={<PersonIcon badge={crossPath} />} value="914" label="Total Non Active Alumni" />
          </div>
          <h2 className="mt-[31px] text-[25px] leading-9 font-normal tracking-[-0.8px] text-[#083d66]">Map</h2>
          <div className="relative mt-[15px] shadow-[0_1px_5px_rgba(0,0,0,0.2)]">
            <MapCanvas />
            <div className="absolute top-[11px] left-[11px] flex h-[71px] w-[38px] flex-col rounded-md border-2 border-[#84a4ae] bg-white text-black">
              <div className="flex flex-1 items-center justify-center border-b border-[#ccc] pt-[2px] pl-[2px]">
                <svg viewBox="0 0 15 15" className="size-[15px]" stroke="currentColor" strokeWidth="2.8">
                  <path d="M0 7.5H15M7.5 1V14" />
                </svg>
              </div>
              <div className="flex flex-1 items-center justify-center">
                <span className="h-[2px] w-[11px] bg-black" />
              </div>
            </div>
          </div>
        </main>
      </div>
    </div>
  );
}
